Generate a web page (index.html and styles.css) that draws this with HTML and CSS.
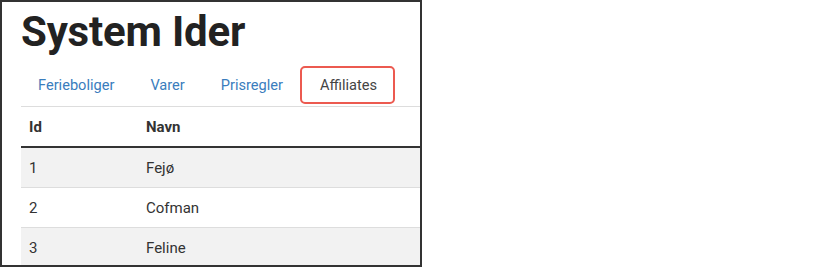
FILE: index.html
```html
<!DOCTYPE html>
<html lang="da">
<head>
<meta charset="utf-8">
<title>System Ider</title>
<link rel="stylesheet" href="styles.css">
</head>
<body>
<div class="frame">
  <h1 class="title">System Ider</h1>
  <ul class="tabs">
    <li><a class="tab" href="#">Ferieboliger</a></li>
    <li><a class="tab" href="#">Varer</a></li>
    <li><a class="tab" href="#">Prisregler</a></li>
    <li><a class="tab active" href="#">Affiliates</a></li>
  </ul>
  <table class="grid">
    <thead>
      <tr><th class="col-id">Id</th><th>Navn</th></tr>
    </thead>
    <tbody>
      <tr class="odd"><td>1</td><td>Fejø</td></tr>
      <tr><td>2</td><td>Cofman</td></tr>
      <tr class="odd"><td>3</td><td>Feline</td></tr>
    </tbody>
  </table>
</div>
</body>
</html>
```
FILE: styles.css
```css
html, body {
  margin: 0;
  padding: 0;
  background: #fff;
}
body {
  font-family: Roboto, "Liberation Sans", sans-serif;
  color: #333;
}
.frame {
  box-sizing: border-box;
  width: 422px;
  height: 267px;
  border: 2px solid #333;
  padding: 7px 0 0 19px;
  overflow: hidden;
}
.title {
  margin: 0;
  font-size: 42px;
  line-height: 46px;
  font-weight: 700;
  color: #222;
  letter-spacing: -0.2px;
}
.tabs {
  list-style: none;
  margin: 11px 0 0;
  padding: 0;
  display: flex;
  border-bottom: 1px solid #ddd;
}
.tabs li {
  margin-bottom: 2px;
}
.tab {
  display: block;
  padding: 7px 15px 7px 15px;
  border: 2px solid transparent;
  border-radius: 5px;
  font-size: 14.6px;
  line-height: 20px;
  color: #3a7dbd;
  text-decoration: none;
  margin-right: 2px;
}
.tab.active {
  color: #444;
  border-color: #ec5a50;
  padding: 7px 16px 7px 18px;
  margin-left: -2px;
}
.grid {
  border-collapse: collapse;
  width: 420px;
  font-size: 15px;
}
.grid th, .grid td {
  text-align: left;
  padding: 10px 8px 9px;
  line-height: 20px;
}
.grid th {
  font-weight: 700;
  border-bottom: 2px solid #333;
  padding: 10px 8px 9px;
}
.grid .col-id {
  width: 101px;
}
.grid td {
  border-bottom: 1px solid #ddd;
}
.grid tr.odd td {
  background: #f2f2f2;
}
```
